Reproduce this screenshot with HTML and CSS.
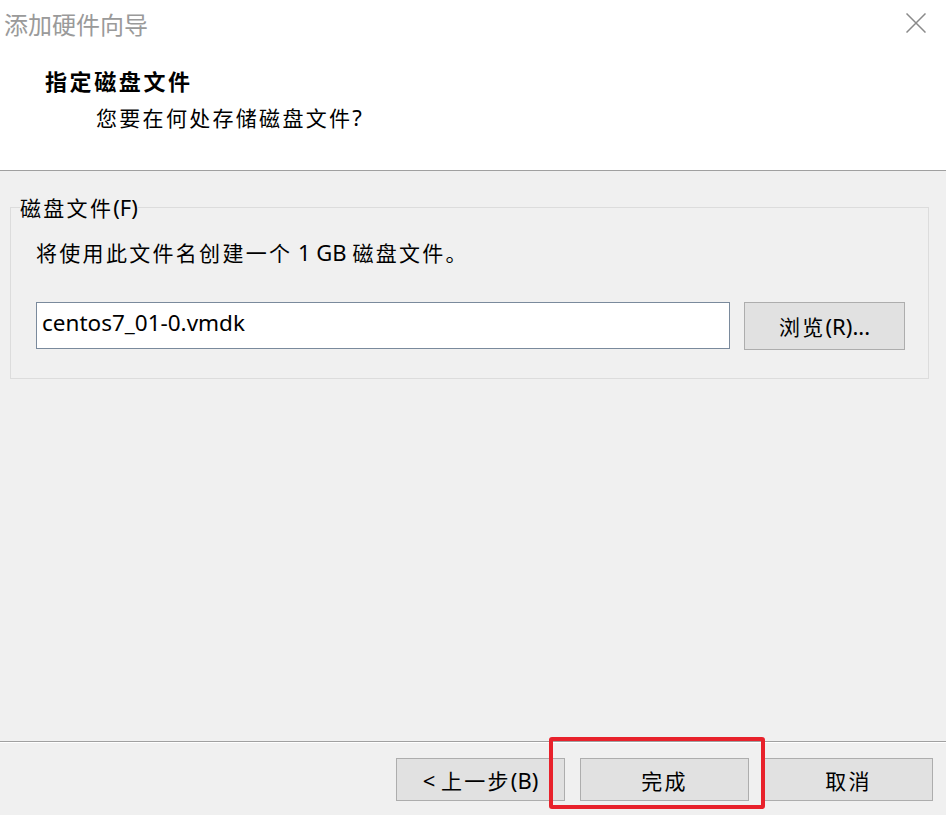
FILE: index.html
```html
<!DOCTYPE html>
<html lang="zh-CN">
<head>
<meta charset="utf-8">
<title>添加硬件向导</title>
<link rel="stylesheet" href="styles.css">
</head>
<body>
<div class="window">
  <header class="header">
    <div class="titlebar">
      <span class="title">添加硬件向导</span>
      <svg class="close" width="20" height="20" viewBox="0 0 20 20" aria-hidden="true">
        <path d="M0.5 0.5 L19.5 19.5 M19.5 0.5 L0.5 19.5" stroke="#8a8a8a" stroke-width="1.5" fill="none"/>
      </svg>
    </div>
    <div class="heading">指定磁盘文件</div>
    <div class="subheading"><span class="c">您要在何处存储磁盘文件</span>?</div>
  </header>

  <main class="main">
    <fieldset class="group">
      <legend class="legend"><span class="c">磁盘文件</span>(F)</legend>
      <div class="group-body">
        <p class="desc"><span class="c">将使用此文件名创建一个</span> 1 GB <span class="c">磁盘文件。</span></p>
        <div class="file-row">
          <div class="input">centos7_01-0.vmdk</div>
          <button class="btn browse"><span class="c">浏览</span>(R)...</button>
        </div>
      </div>
    </fieldset>
  </main>

  <footer class="footer">
    <button class="btn footer-btn">&lt; <span class="c">上一步</span>(B)</button>
    <div class="finish-wrap">
      <button class="btn footer-btn"><span class="c">完成</span></button>
      <span class="highlight"></span>
    </div>
    <button class="btn footer-btn"><span class="c">取消</span></button>
  </footer>
</div>
</body>
</html>
```

FILE: styles.css
```css
* { box-sizing: border-box; }

html, body {
  margin: 0;
  padding: 0;
}

body {
  width: 946px;
  height: 815px;
  overflow: hidden;
  background: #f0f0f0;
  font-family: "Noto Sans", "Noto Sans CJK SC", sans-serif;
  font-size: 22px;
  color: #000;
}

.c {
  font-family: "Noto Sans CJK SC", sans-serif;
  font-size: 21px;
  letter-spacing: 2.3px;
}

.window {
  display: flex;
  flex-direction: column;
  height: 815px;
}

.header {
  height: 171px;
  background: #fff;
  border-bottom: 1px solid #a0a0a0;
}

.titlebar {
  display: flex;
  justify-content: space-between;
  align-items: flex-start;
  height: 46px;
  padding: 8px 20px 0 4px;
}

.title {
  font-size: 24px;
  line-height: 32px;
  color: #9a9a9a;
  font-family: "Noto Sans CJK SC", sans-serif;
}

.close {
  margin-top: 5px;
  display: block;
}

.heading {
  margin: 19px 0 0 45px;
  font-size: 22px;
  line-height: 30px;
  font-weight: bold;
  letter-spacing: 2.6px;
  font-family: "Noto Sans CJK SC", sans-serif;
}

.subheading {
  margin: 8px 0 0 96px;
  line-height: 28px;
}

.main {
  flex: 1;
  padding-top: 24px;
}

.group {
  margin: 0 17px 0 10px;
  padding: 0 0 0 9px;
  border: 1px solid #dcdcdc;
  height: 184px;
}

.legend {
  padding: 0;
  line-height: 24px;
}

.group-body {
  padding: 19px 0 0 16px;
}

.desc {
  margin: 0;
  line-height: 28px;
}

.file-row {
  display: flex;
  gap: 14px;
  margin-top: 36px;
}

.input {
  width: 694px;
  height: 47px;
  background: #fff;
  border: 1px solid #7a8a9c;
  padding: 0 0 0 5px;
  font-size: 22.5px;
  line-height: 40px;
}

.btn {
  font-family: "Noto Sans", "Noto Sans CJK SC", sans-serif;
  font-size: 22px;
  color: #000;
  background: #e1e1e1;
  border: 1px solid #adadad;
  border-radius: 0;
  padding: 0;
  margin: 0;
}

.browse {
  width: 161px;
  height: 48px;
}

.footer {
  height: 74px;
  border-top: 1px solid #a0a0a0;
  box-shadow: inset 0 1px 0 #ffffff;
  display: flex;
  justify-content: flex-end;
  align-items: flex-start;
  gap: 15px;
  padding: 16px 13px 0 0;
}

.footer-btn {
  width: 169px;
  height: 43px;
}

.finish-wrap {
  position: relative;
  display: flex;
}

.highlight {
  position: absolute;
  top: -21px;
  left: -31px;
  right: -16px;
  bottom: -8px;
  border: 4px solid #e8212b;
  border-radius: 3px;
  pointer-events: none;
}
```
